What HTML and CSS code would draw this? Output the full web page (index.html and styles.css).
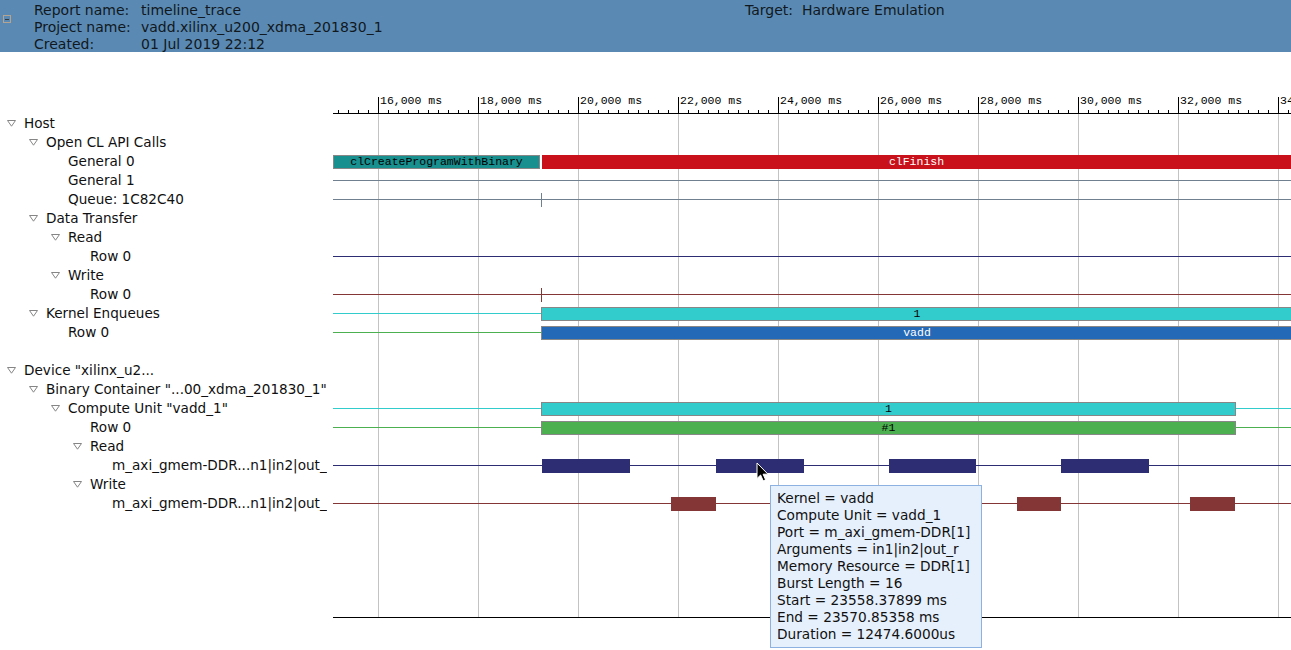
FILE: index.html
```html
<!DOCTYPE html>
<html>
<head>
<meta charset="utf-8">
<title>timeline_trace</title>
<link rel="stylesheet" href="styles.css">
</head>
<body>
<header class="report">
  <div class="toggle"><span class="toggle-box"></span></div>
  <div class="meta">
    <span>Report name:</span><span>timeline_trace</span><span>Target:</span><span>Hardware Emulation</span>
    <span>Project name:</span><span class="wide">vadd.xilinx_u200_xdma_201830_1</span>
    <span>Created:</span><span class="wide">01 Jul 2019 22:12</span>
  </div>
</header>

<main class="timeline">
  <div class="ruler-row">
    <div class="ruler-pad"></div>
    <div class="ruler">
      <span class="major"><span class="lbl">16,000 ms</span></span>
      <span class="major"><span class="lbl">18,000 ms</span></span>
      <span class="major"><span class="lbl">20,000 ms</span></span>
      <span class="major"><span class="lbl">22,000 ms</span></span>
      <span class="major"><span class="lbl">24,000 ms</span></span>
      <span class="major"><span class="lbl">26,000 ms</span></span>
      <span class="major"><span class="lbl">28,000 ms</span></span>
      <span class="major"><span class="lbl">30,000 ms</span></span>
      <span class="major"><span class="lbl">32,000 ms</span></span>
      <span class="major"><span class="lbl">34,000 ms</span></span>
    </div>
  </div>

  <div class="chart">
    <div class="tree">
      <div class="label l0"><svg class="tri" width="9" height="7" viewBox="0 0 9 7"><path d="M0.5 0.5H8.5L4.5 6.2Z"/></svg><span>Host</span></div>
      <div class="label l1"><svg class="tri" width="9" height="7" viewBox="0 0 9 7"><path d="M0.5 0.5H8.5L4.5 6.2Z"/></svg><span>Open CL API Calls</span></div>
      <div class="label l2"><span class="slot"></span><span>General 0</span></div>
      <div class="label l2"><span class="slot"></span><span>General 1</span></div>
      <div class="label l2"><span class="slot"></span><span>Queue: 1C82C40</span></div>
      <div class="label l1"><svg class="tri" width="9" height="7" viewBox="0 0 9 7"><path d="M0.5 0.5H8.5L4.5 6.2Z"/></svg><span>Data Transfer</span></div>
      <div class="label l2"><svg class="tri" width="9" height="7" viewBox="0 0 9 7"><path d="M0.5 0.5H8.5L4.5 6.2Z"/></svg><span>Read</span></div>
      <div class="label l3"><span class="slot"></span><span>Row 0</span></div>
      <div class="label l2"><svg class="tri" width="9" height="7" viewBox="0 0 9 7"><path d="M0.5 0.5H8.5L4.5 6.2Z"/></svg><span>Write</span></div>
      <div class="label l3"><span class="slot"></span><span>Row 0</span></div>
      <div class="label l1"><svg class="tri" width="9" height="7" viewBox="0 0 9 7"><path d="M0.5 0.5H8.5L4.5 6.2Z"/></svg><span>Kernel Enqueues</span></div>
      <div class="label l2"><span class="slot"></span><span>Row 0</span></div>
      <div class="label"></div>
      <div class="label l0"><svg class="tri" width="9" height="7" viewBox="0 0 9 7"><path d="M0.5 0.5H8.5L4.5 6.2Z"/></svg><span>Device "xilinx_u2...</span></div>
      <div class="label l1"><svg class="tri" width="9" height="7" viewBox="0 0 9 7"><path d="M0.5 0.5H8.5L4.5 6.2Z"/></svg><span>Binary Container "...00_xdma_201830_1"</span></div>
      <div class="label l2"><svg class="tri" width="9" height="7" viewBox="0 0 9 7"><path d="M0.5 0.5H8.5L4.5 6.2Z"/></svg><span>Compute Unit "vadd_1"</span></div>
      <div class="label l3"><span class="slot"></span><span>Row 0</span></div>
      <div class="label l3"><svg class="tri" width="9" height="7" viewBox="0 0 9 7"><path d="M0.5 0.5H8.5L4.5 6.2Z"/></svg><span>Read</span></div>
      <div class="label l4"><span class="slot"></span><span>m_axi_gmem-DDR...n1|in2|out_r</span></div>
      <div class="label l3"><svg class="tri" width="9" height="7" viewBox="0 0 9 7"><path d="M0.5 0.5H8.5L4.5 6.2Z"/></svg><span>Write</span></div>
      <div class="label l4"><span class="slot"></span><span>m_axi_gmem-DDR...n1|in2|out_r</span></div>
    </div>

    <div class="tracks">
      <div class="track"></div>
      <div class="track"></div>
      <div class="track">
        <div class="bar teal" style="left:0;width:207px">clCreateProgramWithBinary</div>
        <div class="bar red" style="left:209px;width:749px">clFinish</div>
      </div>
      <div class="track slate"></div>
      <div class="track slate"><div class="tick" style="left:208px"></div></div>
      <div class="track"></div>
      <div class="track"></div>
      <div class="track navy"></div>
      <div class="track"></div>
      <div class="track maroon"><div class="tick" style="left:208px"></div></div>
      <div class="track cyan"><div class="bar cyanbar" style="left:208px;width:752px">1</div></div>
      <div class="track green"><div class="bar blue" style="left:208px;width:752px">vadd</div></div>
      <div class="track"></div>
      <div class="track"></div>
      <div class="track"></div>
      <div class="track cyan"><div class="bar cyanbar" style="left:208px;width:695px">1</div></div>
      <div class="track green"><div class="bar greenbar" style="left:208px;width:695px">#1</div></div>
      <div class="track"></div>
      <div class="track navy">
        <div class="block navyblock" style="left:209px;width:88px"></div>
        <div class="block navyblock" style="left:383px;width:88px"></div>
        <div class="block navyblock" style="left:556px;width:87px"></div>
        <div class="block navyblock" style="left:728px;width:88px"></div>
      </div>
      <div class="track"></div>
      <div class="track maroon">
        <div class="block maroonblock" style="left:338px;width:45px"></div>
        <div class="block maroonblock" style="left:684px;width:44px"></div>
        <div class="block maroonblock" style="left:857px;width:45px"></div>
      </div>
    </div>
  </div>
</main>

<div class="tip">
  <div>Kernel = vadd</div>
  <div>Compute Unit = vadd_1</div>
  <div>Port = m_axi_gmem-DDR[1]</div>
  <div>Arguments = in1|in2|out_r</div>
  <div>Memory Resource = DDR[1]</div>
  <div>Burst Length = 16</div>
  <div>Start = 23558.37899 ms</div>
  <div>End = 23570.85358 ms</div>
  <div>Duration = 12474.6000us</div>
</div>

<svg class="cursor" width="14" height="21" viewBox="0 0 14 21"><path d="M1 1V16.5L4.6 13L7.2 18.8L9.6 17.8L7.1 12.2H12Z" fill="#000" stroke="#fff" stroke-width="1" stroke-linejoin="round"/></svg>
</body>
</html>
```
FILE: styles.css
```css
* { box-sizing: border-box; }
html, body { margin: 0; padding: 0; background: #fff; }
body {
  font-family: "DejaVu Sans", "Noto Sans", sans-serif;
  font-size: 13.6px;
  color: #000;
  width: 1291px;
  height: 650px;
  overflow: hidden;
  position: relative;
}

/* header */
.report {
  display: flex;
  height: 52px;
  padding-top: 2px;
  background: #5a8ab4;
  color: #111820;
  font-size: 14px;
}
.toggle { width: 34px; flex: none; padding: 13px 0 0 3px; }
.toggle-box {
  display: flex;
  align-items: center;
  justify-content: center;
  width: 8px;
  height: 8px;
  border: 1px solid #b5a590;
}
.toggle-box::after { content: ""; width: 4px; height: 1px; background: #3a3a3a; }
.meta {
  display: grid;
  grid-template-columns: 107px 604px 57px auto;
  grid-auto-rows: 17px;
  line-height: 17px;
  white-space: nowrap;
}
.wide { grid-column: span 3; }

/* ruler */
.ruler-row {
  display: flex;
  margin-top: 41px;
  padding-top: 4px;
  overflow: hidden;
}
.ruler-pad { width: 333px; flex: none; }
.ruler {
  flex: 1;
  min-width: 0;
  height: 17px;
  display: flex;
  padding-left: 45px;
  border-bottom: 1px solid #000;
  background: linear-gradient(to right, #000 1px, transparent 1px) 5px 100% / 10px 3px repeat-x;
}
.major {
  flex: none;
  width: 100px;
  height: 16px;
  border-left: 1px solid #000;
  padding-left: 1px;
}
.lbl {
  display: block;
  margin-top: -3px;
  font: 11.5px/13px "Liberation Mono", "DejaVu Sans Mono", monospace;
  color: #000;
  white-space: nowrap;
}

/* chart */
.chart { display: flex; }
.tree { width: 333px; flex: none; }
.label {
  width: 327px;
  height: 19px;
  padding-bottom: 2px;
  display: flex;
  align-items: center;
  white-space: nowrap;
  overflow: hidden;
  color: #101010;
}
.l0 { padding-left: 7px; }
.l1 { padding-left: 29px; }
.l2 { padding-left: 51px; }
.l3 { padding-left: 73px; }
.l4 { padding-left: 95px; }
.tri { flex: none; margin-right: 8px; margin-top: 2px; }
.tri path { fill: none; stroke: #858585; stroke-width: 1; }
.slot { flex: none; width: 17px; }

.tracks {
  flex: 1;
  height: 504px;
  overflow: hidden;
  border-bottom: 1px solid #000;
  background: linear-gradient(to right, #c3c3c3 1px, transparent 1px) 45px 0 / 100px 100% repeat-x;
}
.track {
  --c: transparent;
  position: relative;
  height: 19px;
  background: linear-gradient(var(--c), var(--c)) 0 9px / 100% 1px no-repeat;
}
.slate { --c: #708090; }
.navy { --c: #2c2d72; }
.maroon { --c: #843636; }
.cyan { --c: #33cccc; }
.green { --c: #4caf50; }

.bar {
  position: absolute;
  top: 3px;
  height: 14px;
  border: 1px solid #878787;
  font: 11.5px/12px "Liberation Mono", "DejaVu Sans Mono", monospace;
  text-align: center;
  white-space: nowrap;
  overflow: hidden;
  color: #000;
}
.teal { background: #17908f; }
.red { background: #c8111b; border-color: #c8111b; color: #fff; }
.cyanbar { background: #33cccc; }
.blue { background: #2468b8; color: #fff; }
.greenbar { background: #4caf50; }

.block { position: absolute; top: 3px; height: 14px; }
.navyblock { background: #2c2d72; }
.maroonblock { background: #843636; }
.tick { position: absolute; top: 3px; width: 1px; height: 14px; background: var(--c); }

/* tooltip */
.tip {
  position: absolute;
  left: 770px;
  top: 485px;
  width: 212px;
  height: 163px;
  padding: 4px 6px;
  background: #e6f0fc;
  border: 1px solid #8db1e1;
  font-size: 13.7px;
  line-height: 17px;
  color: #111;
  white-space: nowrap;
}
.cursor { position: absolute; left: 756px; top: 462px; }
```
